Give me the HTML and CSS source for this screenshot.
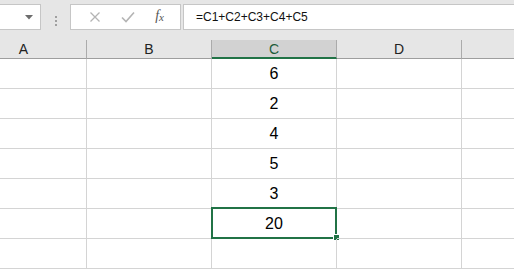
FILE: index.html
```html
<!DOCTYPE html>
<html lang="en">
<head>
    <meta charset="UTF-8">
    <title>Sheet</title>
    <link rel="stylesheet" href="styles.css">
</head>
<body>
    <div class="toolbar">
        <div class="name-box">
            <svg class="caret" width="8" height="5" viewBox="0 0 8 5"><path d="M0 0h8L4 4.5z" fill="#6d6d6d"/></svg>
        </div>
        <div class="grip"><span></span><span></span><span></span></div>
        <div class="func-box">
            <svg width="12" height="12" viewBox="0 0 12 12"><path d="M1.5 1.5l9 9M10.5 1.5l-9 9" stroke="#b4b4b4" stroke-width="1.3" fill="none"/></svg>
            <svg width="14" height="12" viewBox="0 0 14 12"><path d="M1 6.5l4 4L13 1.5" stroke="#b4b4b4" stroke-width="1.6" fill="none"/></svg>
            <span class="fx">f<sub>x</sub></span>
        </div>
        <div class="formula">=C1+C2+C3+C4+C5</div>
    </div>

    <div class="sheet">
        <div class="row head">
            <div class="cell a">A</div>
            <div class="cell b">B</div>
            <div class="cell c active">C</div>
            <div class="cell d">D</div>
            <div class="cell e"></div>
        </div>
        <div class="row"><div class="cell a"></div><div class="cell b"></div><div class="cell c">6</div><div class="cell d"></div><div class="cell e"></div></div>
        <div class="row"><div class="cell a"></div><div class="cell b"></div><div class="cell c">2</div><div class="cell d"></div><div class="cell e"></div></div>
        <div class="row"><div class="cell a"></div><div class="cell b"></div><div class="cell c">4</div><div class="cell d"></div><div class="cell e"></div></div>
        <div class="row"><div class="cell a"></div><div class="cell b"></div><div class="cell c">5</div><div class="cell d"></div><div class="cell e"></div></div>
        <div class="row"><div class="cell a"></div><div class="cell b"></div><div class="cell c">3</div><div class="cell d"></div><div class="cell e"></div></div>
        <div class="row"><div class="cell a"></div><div class="cell b"></div><div class="cell c selected">20<span class="handle"></span></div><div class="cell d"></div><div class="cell e"></div></div>
        <div class="row"><div class="cell a"></div><div class="cell b"></div><div class="cell c"></div><div class="cell d"></div><div class="cell e"></div></div>
    </div>
</body>
</html>
```

FILE: styles.css
```css
body {
    margin: 0;
    width: 514px;
    height: 270px;
    overflow: hidden;
    background-color: #fff;
    font-family: "Liberation Sans", Arial, sans-serif;
}
.toolbar {
    display: flex;
    height: 40px;
    padding-top: 4px;
    box-sizing: border-box;
    background-color: #e6e6e6;
}
.name-box,
.func-box,
.formula {
    height: 26px;
    box-sizing: border-box;
    background-color: #fff;
    border: 1px solid #c6c6c6;
}
.name-box {
    width: 41px;
    border-left: none;
    display: flex;
    align-items: center;
    justify-content: flex-end;
    padding-right: 7px;
}
.caret {
    margin-top: 1px;
}
.grip {
    width: 29px;
    display: flex;
    flex-direction: column;
    align-items: center;
    justify-content: center;
    gap: 2px;
    padding-bottom: 3px;
}
.grip span {
    width: 2px;
    height: 2px;
    background-color: #a0a0a0;
}
.func-box {
    width: 111px;
    display: flex;
    align-items: center;
    justify-content: space-around;
    padding: 0 6px 0 8px;
}
.fx {
    font-family: "Liberation Serif", "Times New Roman", serif;
    font-style: italic;
    font-size: 14px;
    color: #555;
    margin-top: -3px;
}
.fx sub {
    font-size: 11px;
    vertical-align: -1px;
}
.formula {
    flex: 1;
    margin-left: 2px;
    border-right: none;
    padding-left: 12px;
    font-size: 12px;
    line-height: 24px;
    color: #111;
}
.sheet {
    display: flex;
    flex-direction: column;
}
.row {
    display: flex;
    height: 30px;
}
.cell {
    box-sizing: border-box;
    border-right: 1px solid #d4d4d4;
    border-bottom: 1px solid #d4d4d4;
    display: flex;
    align-items: center;
    justify-content: center;
    padding-top: 1px;
    font-size: 16px;
    color: #000;
    position: relative;
}
.a { width: 87px; }
.b { width: 125px; }
.c { width: 125px; }
.d { width: 125px; }
.e { flex: 1; border-right: none; }
.row.head {
    height: 19px;
}
.head .cell {
    background-color: #e6e6e6;
    border-right-color: #ababab;
    border-bottom: 1px solid #9e9e9e;
    font-size: 14px;
    color: #222;
    padding-top: 0;
}
/* column A is partly scrolled off, so its label sits left of centre */
.head .cell.a {
    padding-right: 39px;
}
.head .cell.active {
    background-color: #d2d2d2;
    border-bottom: 2px solid #217346;
    color: #1e5c3a;
}
.selected::before {
    content: "";
    position: absolute;
    top: -2px;
    left: -1px;
    right: -1px;
    bottom: -1px;
    border: 2px solid #217346;
}
.handle {
    position: absolute;
    right: -4px;
    bottom: -3px;
    width: 5px;
    height: 5px;
    background-color: #217346;
    border: 1px solid #fff;
}
```
